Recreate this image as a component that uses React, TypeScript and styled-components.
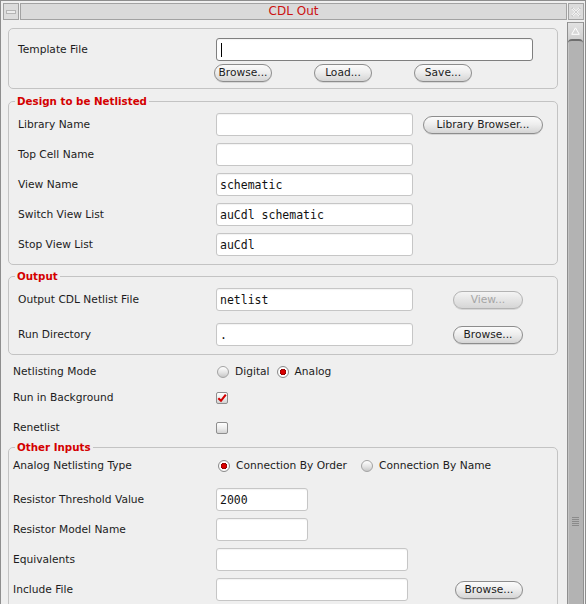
import React from 'react';
import styled, { createGlobalStyle } from 'styled-components';

const Global = createGlobalStyle`
  html, body { margin: 0; padding: 0; background: #efefef; }
  body { font-family: "DejaVu Sans", "Liberation Sans", sans-serif; font-size: 10.67px; color: #1c1c1c; }
  * { box-sizing: border-box; }
`;

const Window = styled.div`
  width: 586px;
  height: 604px;
  border: 1px solid #8e8e8e;
  border-bottom: none;
  background: #efefef;
  display: flex;
  flex-direction: column;
  overflow: hidden;
`;

const TitleBar = styled.div`
  display: flex;
  gap: 1px;
  height: 19px;
  padding: 2px 1px 0 2px;
  flex: none;
`;

const TitleButton = styled.div`
  width: 16px;
  height: 17px;
  border: 1px solid #a2a2a2;
  background: #dcdcdc;
  display: flex;
  align-items: center;
  justify-content: center;
  flex: none;
`;

const TitleArea = styled.div`
  flex: 1;
  height: 17px;
  border: 1px solid #a2a2a2;
  background: #dadada;
  display: flex;
  align-items: center;
  justify-content: center;
  color: #cc1111;
  font-size: 12px;
  line-height: 15px;
`;

const Body = styled.div`
  flex: 1;
  min-height: 0;
  display: flex;
`;

const Content = styled.div`
  flex: 1;
  min-width: 0;
  overflow: hidden;
  padding: 8px 9px 0 7px;
  display: flex;
  flex-direction: column;
`;

const Box = styled.div`
  border: 1px solid #c3c3c3;
  border-radius: 5px;
  padding: 9px 0 6px 9px;
  display: flex;
  flex-direction: column;
  gap: 3px;
`;

const Group = styled.fieldset<{ $mt: number }>`
  margin: ${(p) => p.$mt}px 0 0 0;
  padding: 0;
  min-width: 0;
  border: 1px solid #c3c3c3;
  border-radius: 5px;
`;

const Legend = styled.legend`
  margin-left: 6px;
  padding: 0 2px;
  font-weight: bold;
  font-size: 10.3px;
  line-height: 13px;
  color: #d40000;
`;

const GroupBody = styled.div<{ $pl: number; $pt: number; $pb: number; $gap: number }>`
  display: flex;
  flex-direction: column;
  padding: ${(p) => p.$pt}px 0 ${(p) => p.$pb}px ${(p) => p.$pl}px;
  gap: ${(p) => p.$gap}px;
`;

const Row = styled.div<{ $mt?: number; $h?: number }>`
  display: flex;
  align-items: center;
  height: ${(p) => p.$h ?? 23}px;
  margin-top: ${(p) => p.$mt ?? 0}px;
  flex: none;
`;

const Label = styled.span<{ $w: number }>`
  width: ${(p) => p.$w}px;
  flex: none;
  white-space: nowrap;
  line-height: 14px;
`;

const Field = styled.div<{ $w: number; $focus?: boolean }>`
  width: ${(p) => p.$w}px;
  height: 23px;
  flex: none;
  background: #ffffff;
  border: 1px solid ${(p) => (p.$focus ? '#7f7f7f' : '#c6c6c6')};
  border-radius: 3px;
  box-shadow: inset 0 1px 1px rgba(0, 0, 0, 0.05);
  padding: 0 3px;
  display: flex;
  align-items: center;
  font-family: "DejaVu Sans Mono", "Liberation Mono", monospace;
  font-size: 11.5px;
  color: #111;
  white-space: pre;
`;

const Caret = styled.span`
  width: 1px;
  height: 14px;
  background: #000;
  margin-left: 1px;
`;

const Button = styled.button<{ $w: number; $ml?: number }>`
  width: ${(p) => p.$w}px;
  height: 18px;
  flex: none;
  margin: 0 0 0 ${(p) => p.$ml ?? 0}px;
  padding: 0;
  border: 1px solid #8d8d8d;
  border-radius: 9px;
  background: linear-gradient(#fbfbfb, #eeeeee 45%, #d5d5d5);
  box-shadow: 0 1px 0 rgba(0, 0, 0, 0.1);
  font-family: "DejaVu Sans", "Liberation Sans", sans-serif;
  font-size: 10.67px;
  line-height: 16px;
  color: #1c1c1c;
  white-space: nowrap;
  &:disabled {
    color: #a6a6a6;
    border-color: #b3b3b3;
    background: linear-gradient(#f4f4f4, #e6e6e6 45%, #d6d6d6);
  }
`;

const ButtonRow = styled.div<{ $ml: number }>`
  display: flex;
  gap: 42px;
  padding-left: ${(p) => p.$ml}px;
  height: 18px;
`;

const Options = styled.div`
  display: flex;
  align-items: center;
`;

const Option = styled.label<{ $mr?: number }>`
  display: flex;
  align-items: center;
  gap: 6px;
  margin-right: ${(p) => p.$mr ?? 0}px;
  white-space: nowrap;
  line-height: 14px;
`;

const Radio = styled.span<{ $on?: boolean }>`
  width: 12px;
  height: 12px;
  border-radius: 50%;
  flex: none;
  border: 1px solid ${(p) => (p.$on ? '#8a8a8a' : '#a3a3a3')};
  background: ${(p) =>
    p.$on
      ? 'radial-gradient(circle at 50% 50%, #e00000 0, #d00000 2.3px, #7a0000 2.9px, #ffffff 3.4px, #f0f0f0 100%)'
      : 'linear-gradient(#ffffff, #e4e4e4 55%, #c8c8c8)'};
`;

const Check = styled.span`
  width: 12px;
  height: 12px;
  flex: none;
  border: 1px solid #8e8e8e;
  border-radius: 2px;
  background: linear-gradient(#ffffff, #ececec 55%, #d2d2d2);
  display: flex;
  align-items: center;
  justify-content: center;
`;

const Scrollbar = styled.div`
  width: 17px;
  margin: 2px 1px 0 0;
  flex: none;
  display: flex;
  flex-direction: column;
  overflow: hidden;
  border-left: 1px solid #8f8f8f;
  border-right: 1px solid #8f8f8f;
  background: #cfcfcf;
`;

const ArrowButton = styled.div`
  height: 17px;
  flex: none;
  border-top: 1px solid #9a9a9a;
  background: linear-gradient(#e2e2e2, #d0d0d0);
  display: flex;
  justify-content: center;
  padding-top: 4px;
`;

const Thumb = styled.div`
  height: 962px;
  flex: none;
  background: #b3b3b3;
  border-top: 2px solid #6e6e6e;
  border-radius: 4px 4px 0 0;
  box-shadow: inset 1px 0 0 #c4c4c4;
  display: flex;
  align-items: center;
  justify-content: center;
`;

const Rows = styled.div`
  display: flex;
  flex-direction: column;
  padding-left: 5px;
`;

const CheckMark = () => (
  <svg width="10" height="10" viewBox="0 0 10 10">
    <path d="M1.3 5.2 L4 7.8 L8.8 1.6" fill="none" stroke="#d20000" strokeWidth="2.1" strokeLinejoin="miter" />
  </svg>
);

export default function App() {
  return (
    <>
      <Global />
      <Window>
        <TitleBar>
          <TitleButton>
            <svg width="10" height="6" viewBox="0 0 10 6">
              <rect x="0.5" y="1.5" width="9" height="3" fill="#ececec" stroke="#b4b4b4" />
            </svg>
          </TitleButton>
          <TitleArea>CDL Out</TitleArea>
          <TitleButton>
            <svg width="12" height="12" viewBox="0 0 12 12">
              <path d="M2 2 L10 10 M10 2 L2 10" stroke="#f4f4f4" strokeWidth="2.2" />
              <path d="M2 2 L10 10 M10 2 L2 10" stroke="#c4c4c4" strokeWidth="0.8" />
              <path d="M1 3 L3 1 M9 1 L11 3 M1 9 L3 11 M9 11 L11 9" stroke="#c8c8c8" strokeWidth="0.8" />
            </svg>
          </TitleButton>
        </TitleBar>
        <Body>
          <Content>
            <Box>
              <Row>
                <Label $w={198}>Template File</Label>
                <Field $w={317} $focus>
                  <Caret />
                </Field>
              </Row>
              <ButtonRow $ml={196}>
                <Button $w={58}>Browse...</Button>
                <Button $w={58}>Load...</Button>
                <Button $w={58}>Save...</Button>
              </ButtonRow>
            </Box>

            <Group $mt={6}>
              <Legend>Design to be Netlisted</Legend>
              <GroupBody $pl={9} $pt={5} $pb={8} $gap={7}>
                <Row>
                  <Label $w={198}>Library Name</Label>
                  <Field $w={197} />
                  <Button $w={120} $ml={10}>Library Browser...</Button>
                </Row>
                <Row>
                  <Label $w={198}>Top Cell Name</Label>
                  <Field $w={197} />
                </Row>
                <Row>
                  <Label $w={198}>View Name</Label>
                  <Field $w={197}>schematic</Field>
                </Row>
                <Row>
                  <Label $w={198}>Switch View List</Label>
                  <Field $w={197}>auCdl schematic</Field>
                </Row>
                <Row>
                  <Label $w={198}>Stop View List</Label>
                  <Field $w={197}>auCdl</Field>
                </Row>
              </GroupBody>
            </Group>

            <Group $mt={5}>
              <Legend>Output</Legend>
              <GroupBody $pl={9} $pt={5} $pb={8} $gap={12}>
                <Row>
                  <Label $w={198}>Output CDL Netlist File</Label>
                  <Field $w={197}>netlist</Field>
                  <Button $w={70} $ml={40} disabled>View...</Button>
                </Row>
                <Row>
                  <Label $w={198}>Run Directory</Label>
                  <Field $w={197}>.</Field>
                  <Button $w={70} $ml={40}>Browse...</Button>
                </Row>
              </GroupBody>
            </Group>

            <Rows>
              <Row $h={22} $mt={6}>
                <Label $w={204}>Netlisting Mode</Label>
                <Options>
                  <Option $mr={7}><Radio />Digital</Option>
                  <Option><Radio $on />Analog</Option>
                </Options>
              </Row>
              <Row $h={22} $mt={4}>
                <Label $w={203}>Run in Background</Label>
                <Check><CheckMark /></Check>
              </Row>
              <Row $h={22} $mt={8}>
                <Label $w={203}>Renetlist</Label>
                <Check />
              </Row>
            </Rows>

            <Group $mt={2}>
              <Legend>Other Inputs</Legend>
              <GroupBody $pl={4} $pt={1} $pb={8} $gap={7}>
                <Row $h={22}>
                  <Label $w={205}>Analog Netlisting Type</Label>
                  <Options>
                    <Option $mr={14}><Radio $on />Connection By Order</Option>
                    <Option><Radio />Connection By Name</Option>
                  </Options>
                </Row>
                <Row $mt={4}>
                  <Label $w={203}>Resistor Threshold Value</Label>
                  <Field $w={92}>2000</Field>
                </Row>
                <Row>
                  <Label $w={203}>Resistor Model Name</Label>
                  <Field $w={92} />
                </Row>
                <Row>
                  <Label $w={203}>Equivalents</Label>
                  <Field $w={192} />
                </Row>
                <Row>
                  <Label $w={203}>Include File</Label>
                  <Field $w={192} />
                  <Button $w={68} $ml={47}>Browse...</Button>
                </Row>
              </GroupBody>
            </Group>
          </Content>
          <Scrollbar>
            <ArrowButton>
              <svg width="9" height="8" viewBox="0 0 9 8">
                <path d="M4.5 0.8 L8.3 7.3 L0.7 7.3 Z" fill="none" stroke="#ffffff" strokeWidth="1" />
              </svg>
            </ArrowButton>
            <Thumb>
              <svg width="7" height="9" viewBox="0 0 7 9">
                <path d="M0 0.5 H7 M0 2.5 H7 M0 4.5 H7 M0 6.5 H7 M0 8.5 H7" stroke="#8a8a8a" strokeWidth="1" />
              </svg>
            </Thumb>
          </Scrollbar>
        </Body>
      </Window>
    </>
  );
}
